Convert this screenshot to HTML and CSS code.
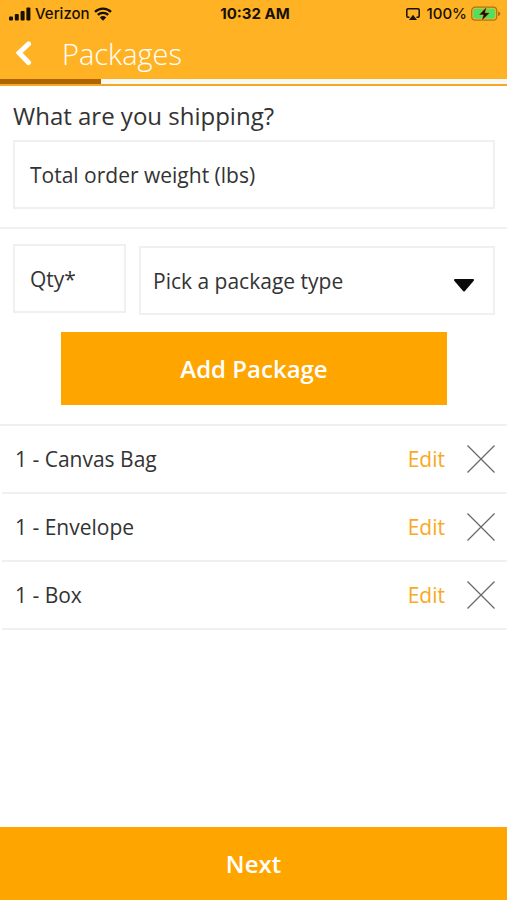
FILE: index.html
```html
<!DOCTYPE html>
<html lang="en">
<head>
<meta charset="utf-8">
<meta name="viewport" content="width=device-width, initial-scale=1">
<title>Packages</title>
<link rel="stylesheet" href="styles.css">
</head>
<body>
<header class="header">
  <div class="status">
    <div class="status-side">
      <svg class="signal" width="22" height="14" viewBox="0 0 22 14" aria-hidden="true">
        <rect x="0" y="9.500" width="4" height="4" rx="1"/><rect x="5.800" y="7" width="4" height="6.500" rx="1"/><rect x="11.600" y="4" width="4" height="9.500" rx="1"/><rect x="17.400" y=".5" width="4" height="13" rx="1"/>
      </svg>
      <span class="carrier">Verizon</span>
      <svg width="18" height="14" viewBox="0 0 18 14" aria-hidden="true">
        <path d="M1 4.800a11.600 11.600 0 0 1 16 0M3.800 7.900a7.600 7.600 0 0 1 10.400 0" fill="none" stroke="#171003" stroke-width="2.400"/>
        <path d="M5.800 10.400a4.800 4.800 0 0 1 6.400 0L9 13.700z"/>
      </svg>
    </div>
    <time class="clock">10:32 AM</time>
    <div class="status-side status-right">
      <svg class="airplay" width="14" height="12" viewBox="0 0 14 12" aria-hidden="true">
        <path d="M3.500 9.300H2A1.200 1.200 0 0 1 .8 8.100V2A1.200 1.200 0 0 1 2 .8h10A1.200 1.200 0 0 1 13.200 2v6.100A1.200 1.200 0 0 1 12 9.300h-1.500" fill="none" stroke="#171003" stroke-width="1.500"/>
        <path d="M7 6.800l4 5.200H3z"/>
      </svg>
      <span class="charge">100%</span>
      <svg width="30" height="16" viewBox="0 0 30 16" aria-hidden="true">
        <rect x=".7" y="1.200" width="25" height="13" rx="3.500" fill="none" stroke="#a8741a" stroke-width="1.200"/>
        <rect x="2.300" y="2.800" width="21.800" height="9.800" rx="2" fill="#4be162"/>
        <path d="M27 5.500v4.500q2.400-.6 2.400-2.250T27 5.500z" fill="#a8741a"/>
        <path d="M15.700.8L7.800 8.900h4.500L10.500 15l8.400-8.300h-4.700z" stroke="#ffb324" stroke-width=".5"/>
      </svg>
    </div>
  </div>
  <nav class="nav">
    <button class="back" type="button" aria-label="Back">
      <svg width="16" height="26" viewBox="0 0 16 26" aria-hidden="true"><path d="M12.500 3L3 11.800 12.500 21.500" fill="none" stroke="#fff" stroke-width="5" stroke-linecap="round"/></svg>
    </button>
    <h1 class="title">Packages</h1>
  </nav>
  <div class="progress"><div class="progress-done"></div></div>
</header>
<main class="main">
  <section class="weight">
    <h2 class="question">What are you shipping?</h2>
    <input class="field" type="text" inputmode="decimal" placeholder="Total order weight (lbs)" aria-label="Total order weight (lbs)">
  </section>
  <form class="add">
    <div class="add-fields">
      <input class="field qty" type="text" inputmode="numeric" placeholder="Qty*" aria-label="Qty*">
      <div class="picker">
        <select class="field select" aria-label="Pick a package type">
          <option>Pick a package type</option><option>Canvas Bag</option><option>Envelope</option><option>Box</option>
        </select>
        <svg class="caret" width="22" height="14" viewBox="0 0 22 14" aria-hidden="true"><path d="M2 2h18L11 12.500z" stroke="#0b0b0b" stroke-width="2" stroke-linejoin="round" fill="#0b0b0b"/></svg>
      </div>
    </div>
    <button class="add-button" type="button">Add Package</button>
  </form>
  <ul class="packages">
    <li class="package"><span class="name">1 - Canvas Bag</span><button class="edit" type="button">Edit</button><button class="remove" type="button" aria-label="Remove Canvas Bag"><svg width="28" height="28" viewBox="0 0 28 28" aria-hidden="true"><path class="cross" d="M.5.5l27 27M27.500.5l-27 27"/></svg></button></li>
    <li class="package"><span class="name">1 - Envelope</span><button class="edit" type="button">Edit</button><button class="remove" type="button" aria-label="Remove Envelope"><svg width="28" height="28" viewBox="0 0 28 28" aria-hidden="true"><path class="cross" d="M.5.5l27 27M27.500.5l-27 27"/></svg></button></li>
    <li class="package"><span class="name">1 - Box</span><button class="edit" type="button">Edit</button><button class="remove" type="button" aria-label="Remove Box"><svg width="28" height="28" viewBox="0 0 28 28" aria-hidden="true"><path class="cross" d="M.5.5l27 27M27.500.5l-27 27"/></svg></button></li>
  </ul>
</main>
<button class="next" type="button">Next</button>
</body>
</html>
```
FILE: styles.css
```css
* { box-sizing: border-box; }
body {
  margin: 0;
  min-height: 100vh;
  display: flex;
  flex-direction: column;
  background: #fff;
  color: #333;
  font-family: "Open Sans", sans-serif;
  font-size: 21px;
}
button, input, select { font: inherit; color: inherit; }
button { border: 0; padding: 0; background: none; cursor: pointer; }
svg { display: block; flex: none; }

.header { background: #ffb324; border-bottom: 2px solid #f5a62b; }
.status {
  display: grid;
  grid-template-columns: 1fr auto 1fr;
  align-items: center;
  height: 28px;
  padding: 0 6px 0 9px;
  color: #171003;
  fill: #171003;
  font: 500 15px/20px Inter, sans-serif;
}
.status-side { display: flex; align-items: center; gap: 4px; }
.status-right { justify-content: flex-end; }
.airplay { margin-right: 3px; }
.clock { font-weight: 700; }
.nav { display: flex; align-items: center; gap: 30px; height: 51px; padding: 0 16px; }
.title { margin: 0; color: #fff; font-size: 29px; font-weight: 300; line-height: 40px; }
.progress { height: 5px; background: #f6faf3; }
.progress-done { width: 20%; height: 100%; background: #ae6500; }

.main { flex: 1; }
.weight { padding: 12px 12px 18px 13px; border-bottom: 2px solid #f0f0f0; }
.question { margin: 0 0 6px; font-size: 24px; font-weight: 400; line-height: 36px; }
.field {
  display: block;
  width: 100%;
  height: 69px;
  padding: 0 15px;
  border: 2px solid #f0f0f0;
  border-radius: 0;
  background: #fff;
  outline: 0;
}
.field::placeholder { color: inherit; opacity: 1; }
.add { padding: 15px 12px 19px 13px; border-bottom: 2px solid #f0f0f0; }
.add-fields { display: flex; gap: 13px; }
.qty { width: 113px; }
.picker { position: relative; flex: 1; margin-top: 2px; }
.select { appearance: none; padding: 0 12px; }
.caret { position: absolute; right: 20px; top: 32px; pointer-events: none; }
.add-button {
  display: block;
  width: 80%;
  height: 73px;
  margin: 17px auto 0;
  background: #ffa500;
  color: #fff;
  font-size: 24px;
  font-weight: 600;
}
.packages { margin: 0; padding: 0 0 0 2px; list-style: none; }
.package {
  display: flex;
  align-items: center;
  min-height: 68px;
  padding: 0 12px 0 13px;
  border-bottom: 2px solid #f0f0f0;
}
.name { flex: 1; }
.edit { color: #f9a91f; }
.remove { margin-left: 22px; }
.cross { fill: none; stroke: #666; stroke-width: 1.2; }
.next { width: 100%; height: 73px; background: #ffa500; color: #fff; font-size: 24px; font-weight: 600; }
```
